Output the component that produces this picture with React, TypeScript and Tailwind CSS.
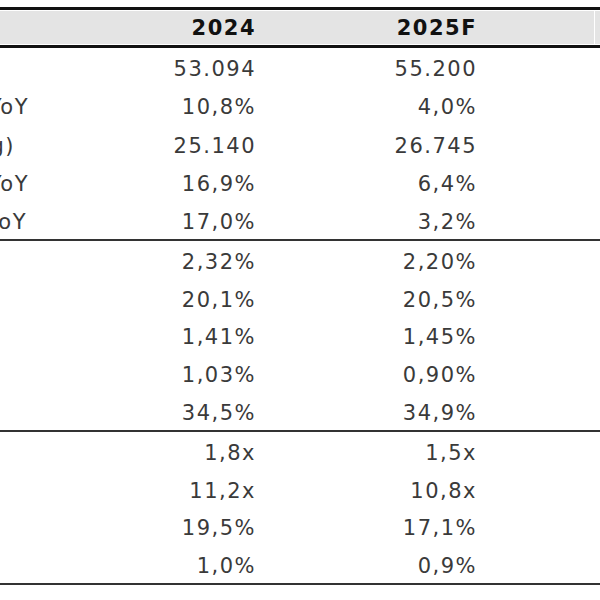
import React from 'react';

// Bảng chỉ tiêu tài chính (phần bị cắt bên trái)
type Row = { label: string; labelEnd: string; a: string; b: string };

const sections: { rows: Row[]; h: string }[] = [
  {
    h: 'h-[191px]',
    rows: [
      { label: 'Doanh thu thuần', labelEnd: 'mr-[160px]', a: '53.094', b: '55.200' },
      { label: 'Tăng trưởng YoY', labelEnd: 'mr-[121px]', a: '10,8%', b: '4,0%' },
      { label: 'LNTT (tỷ đồng)', labelEnd: 'mr-[135px]', a: '25.140', b: '26.745' },
      { label: 'Tăng trưởng YoY', labelEnd: 'mr-[121px]', a: '16,9%', b: '6,4%' },
      { label: 'Tín dụng YoY', labelEnd: 'mr-[123px]', a: '17,0%', b: '3,2%' },
    ],
  },
  {
    h: 'h-[189px]',
    rows: [
      { label: 'NIM', labelEnd: 'mr-[200px]', a: '2,32%', b: '2,20%' },
      { label: 'CIR', labelEnd: 'mr-[200px]', a: '20,1%', b: '20,5%' },
      { label: 'NPL', labelEnd: 'mr-[200px]', a: '1,41%', b: '1,45%' },
      { label: 'Credit cost', labelEnd: 'mr-[200px]', a: '1,03%', b: '0,90%' },
      { label: 'CASA', labelEnd: 'mr-[200px]', a: '34,5%', b: '34,9%' },
    ],
  },
  {
    h: 'h-[151px]',
    rows: [
      { label: 'P/B', labelEnd: 'mr-[200px]', a: '1,8x', b: '1,5x' },
      { label: 'P/E', labelEnd: 'mr-[200px]', a: '11,2x', b: '10,8x' },
      { label: 'ROE', labelEnd: 'mr-[200px]', a: '19,5%', b: '17,1%' },
      { label: 'Cổ tức', labelEnd: 'mr-[200px]', a: '1,0%', b: '0,9%' },
    ],
  },
];

function DataRow({ row }: { row: Row }) {
  return (
    <div className="flex flex-1 min-h-0 items-center pt-[5px] text-[21px] leading-none text-[#3a3a3a] tracking-[1.5px]">
      <div className="flex w-[150px] shrink-0 justify-end whitespace-nowrap">
        <span className={`shrink-0 ${row.labelEnd}`}>{row.label}</span>
      </div>
      <div className="w-[106px] shrink-0 text-right">{row.a}</div>
      <div className="w-[221px] shrink-0 text-right">{row.b}</div>
      <div className="flex-1" />
    </div>
  );
}

export default function App() {
  return (
    <div
      className="w-[600px] h-[600px] overflow-hidden bg-white pt-[7px]"
      style={{ fontFamily: '"DejaVu Sans", "Liberation Sans", sans-serif' }}
    >
      {/* header */}
      <div className="border-y-[3px] border-[#111]">
        <div className="flex h-[35px] border-y border-white bg-[#e4e4e4] text-[21px] leading-none font-bold text-[#111] tracking-[1.5px]">
          <div className="w-[150px] shrink-0" />
          <div className="w-[106px] shrink-0 flex items-center justify-end pt-[2px]">2024</div>
          <div className="w-[221px] shrink-0 flex items-center justify-end pt-[2px]">2025F</div>
          <div className="w-[117px] shrink-0" />
          <div className="flex-1 border-l border-white" />
        </div>
      </div>

      {sections.map((s, i) => (
        <div key={i} className="border-b-2 border-[#333]">
          <div className={`flex flex-col ${s.h}`}>
            {s.rows.map((r, j) => (
              <DataRow key={j} row={r} />
            ))}
          </div>
        </div>
      ))}
    </div>
  );
}
